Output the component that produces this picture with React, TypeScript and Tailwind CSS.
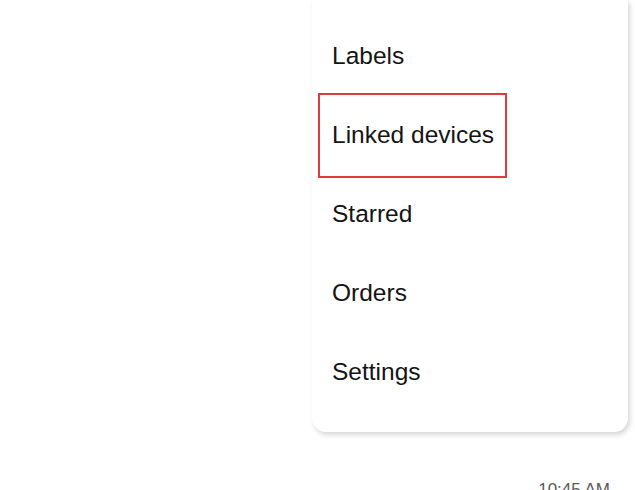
const items = ["Labels", "Linked devices", "Starred", "Orders", "Settings"];

export default function App() {
    return (
        <div className="h-[490px] w-[635px] overflow-hidden bg-white font-['Liberation_Sans',Arial,sans-serif]">
            <div className="flex justify-end pr-[7px]">
                <div className="w-[316px] rounded-b-[14px] bg-white pt-[16px] pb-[21px] shadow-[2px_3px_5px_rgba(0,0,0,0.16)]">
                    {items.map((item) => (
                        <div
                            key={item}
                            className="relative flex h-[79px] items-center pl-[20px] text-[24.5px] leading-[28px] text-[#141414]"
                        >
                            {item === "Linked devices" && (
                                <div className="absolute -top-[2px] -bottom-[4px] left-[6px] w-[189px] border-2 border-[#e0393e]" />
                            )}
                            <span className="relative">{item}</span>
                        </div>
                    ))}
                </div>
            </div>

            <div className="mt-[48px] pr-[25px] text-right text-[17px] leading-[20px] text-[#5a5a5a]">
                10:45 AM
            </div>
        </div>
    );
}
